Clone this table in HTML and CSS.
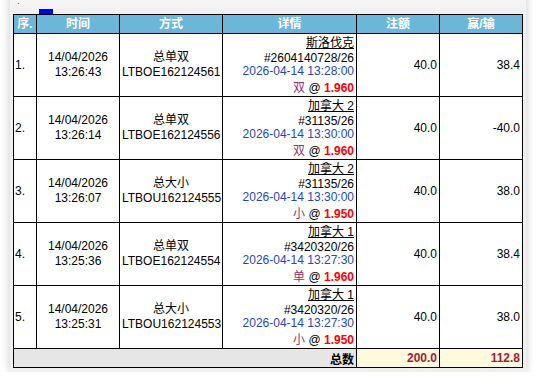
FILE: index.html
```html
<!DOCTYPE html>
<html lang="zh">
<head>
<meta charset="utf-8">
<link rel="stylesheet" href="styles.css">
</head>
<body>
<div class="panel">
  <div class="topbar"><span class="lbl">页 :</span><span class="pg"></span></div>
  <table class="bets">
    <colgroup>
      <col class="c-no"><col class="c-time"><col class="c-type"><col class="c-detail"><col class="c-amt"><col class="c-win">
    </colgroup>
    <thead>
      <tr><th>序.</th><th>时间</th><th>方式</th><th>详情</th><th>注额</th><th>赢/输</th></tr>
    </thead>
    <tbody>
      <tr>
        <td class="no">1.</td>
        <td class="ctr">14/04/2026<br>13:26:43</td>
        <td class="ctr">总单双<br>LTBOE162124561</td>
        <td class="detail"><div class="team">斯洛伐克</div><div class="code">#2604140728/26</div><div class="date">2026-04-14 13:28:00</div><div class="bet"><span class="sel">双</span> @ <span class="odds">1.960</span></div></td>
        <td class="num">40.0</td>
        <td class="num">38.4</td>
      </tr>
      <tr>
        <td class="no">2.</td>
        <td class="ctr">14/04/2026<br>13:26:14</td>
        <td class="ctr">总单双<br>LTBOE162124556</td>
        <td class="detail"><div class="team">加拿大 2</div><div class="code">#31135/26</div><div class="date">2026-04-14 13:30:00</div><div class="bet"><span class="sel">双</span> @ <span class="odds">1.960</span></div></td>
        <td class="num">40.0</td>
        <td class="num">-40.0</td>
      </tr>
      <tr>
        <td class="no">3.</td>
        <td class="ctr">14/04/2026<br>13:26:07</td>
        <td class="ctr">总大小<br>LTBOU162124555</td>
        <td class="detail"><div class="team">加拿大 2</div><div class="code">#31135/26</div><div class="date">2026-04-14 13:30:00</div><div class="bet"><span class="sel">小</span> @ <span class="odds">1.950</span></div></td>
        <td class="num">40.0</td>
        <td class="num">38.0</td>
      </tr>
      <tr>
        <td class="no">4.</td>
        <td class="ctr">14/04/2026<br>13:25:36</td>
        <td class="ctr">总单双<br>LTBOE162124554</td>
        <td class="detail"><div class="team">加拿大 1</div><div class="code">#3420320/26</div><div class="date">2026-04-14 13:27:30</div><div class="bet"><span class="sel">单</span> @ <span class="odds">1.960</span></div></td>
        <td class="num">40.0</td>
        <td class="num">38.4</td>
      </tr>
      <tr>
        <td class="no">5.</td>
        <td class="ctr">14/04/2026<br>13:25:31</td>
        <td class="ctr">总大小<br>LTBOU162124553</td>
        <td class="detail"><div class="team">加拿大 1</div><div class="code">#3420320/26</div><div class="date">2026-04-14 13:27:30</div><div class="bet"><span class="sel">小</span> @ <span class="odds">1.950</span></div></td>
        <td class="num">40.0</td>
        <td class="num">38.0</td>
      </tr>
    </tbody>
    <tfoot>
      <tr>
        <td class="sum-label" colspan="4">总数</td>
        <td class="sum">200.0</td>
        <td class="sum">112.8</td>
      </tr>
    </tfoot>
  </table>
</div>
</body>
</html>
```
FILE: styles.css
```css
html, body {
  margin: 0;
  padding: 0;
  background: #ffffff;
}
body {
  font-family: "Liberation Sans", Arial, "Noto Sans CJK SC", sans-serif;
  font-size: 12px;
  color: #000;
  overflow: hidden;
}
.panel {
  margin: -8px 0 0 10px;
  width: 516px;
  box-sizing: border-box;
  padding: 0 4px 4px 3px;
  background: linear-gradient(#fafafa 0px, #f0f0f0 20px, #f0f0f0);
  box-shadow: 0 0 9px rgba(0, 0, 0, 0.22);
}
.topbar {
  height: 22px;
  display: flex;
  align-items: flex-end;
  padding-left: 4px;
}
.lbl {
  display: inline-block;
  width: 22px;
  font-size: 11px;
  line-height: 11px;
  color: #555;
  margin-bottom: 8px;
  letter-spacing: 2px;
}
.pg {
  display: inline-block;
  width: 14px;
  height: 5px;
  background: #0000ee;
}
.bets {
  border-collapse: collapse;
  table-layout: fixed;
  width: 509px;
  background: #ffffff;
}
.c-no { width: 23px; }
.c-time { width: 83px; }
.c-type { width: 103px; }
.c-detail { width: 134px; }
.c-amt { width: 83px; }
.c-win { width: 83px; }
.bets th, .bets td {
  border: 1px solid #000;
  padding: 0 2px;
}
.bets th {
  background: #6cb6da;
  color: #fff;
  font-weight: bold;
  height: 18px;
  text-align: center;
  line-height: 14px;
}
.bets tbody td {
  height: 60px;
  line-height: 14px;
}
.no {
  text-align: left;
  padding-left: 1px !important;
}
.ctr {
  text-align: center;
  line-height: 15px !important;
}
.detail {
  text-align: right;
  vertical-align: top;
  padding-top: 2px !important;
  padding-bottom: 0 !important;
}
.team {
  text-decoration: underline;
  line-height: 14px;
}
.code {
  margin-top: 1px;
  line-height: 14px;
}
.date {
  color: #2447c0;
  line-height: 13px;
}
.bet {
  margin-top: 3px;
  line-height: 14px;
}
.sel {
  color: #993366;
}
.odds {
  color: #ff0000;
  font-weight: bold;
}
.num {
  text-align: right;
}
.sum-label {
  background: #e6e6e6;
  text-align: right;
  font-weight: bold;
  height: 18px;
}
.sum {
  background: #fffadb;
  color: #a0203c;
  font-weight: bold;
  text-align: right;
}
```
